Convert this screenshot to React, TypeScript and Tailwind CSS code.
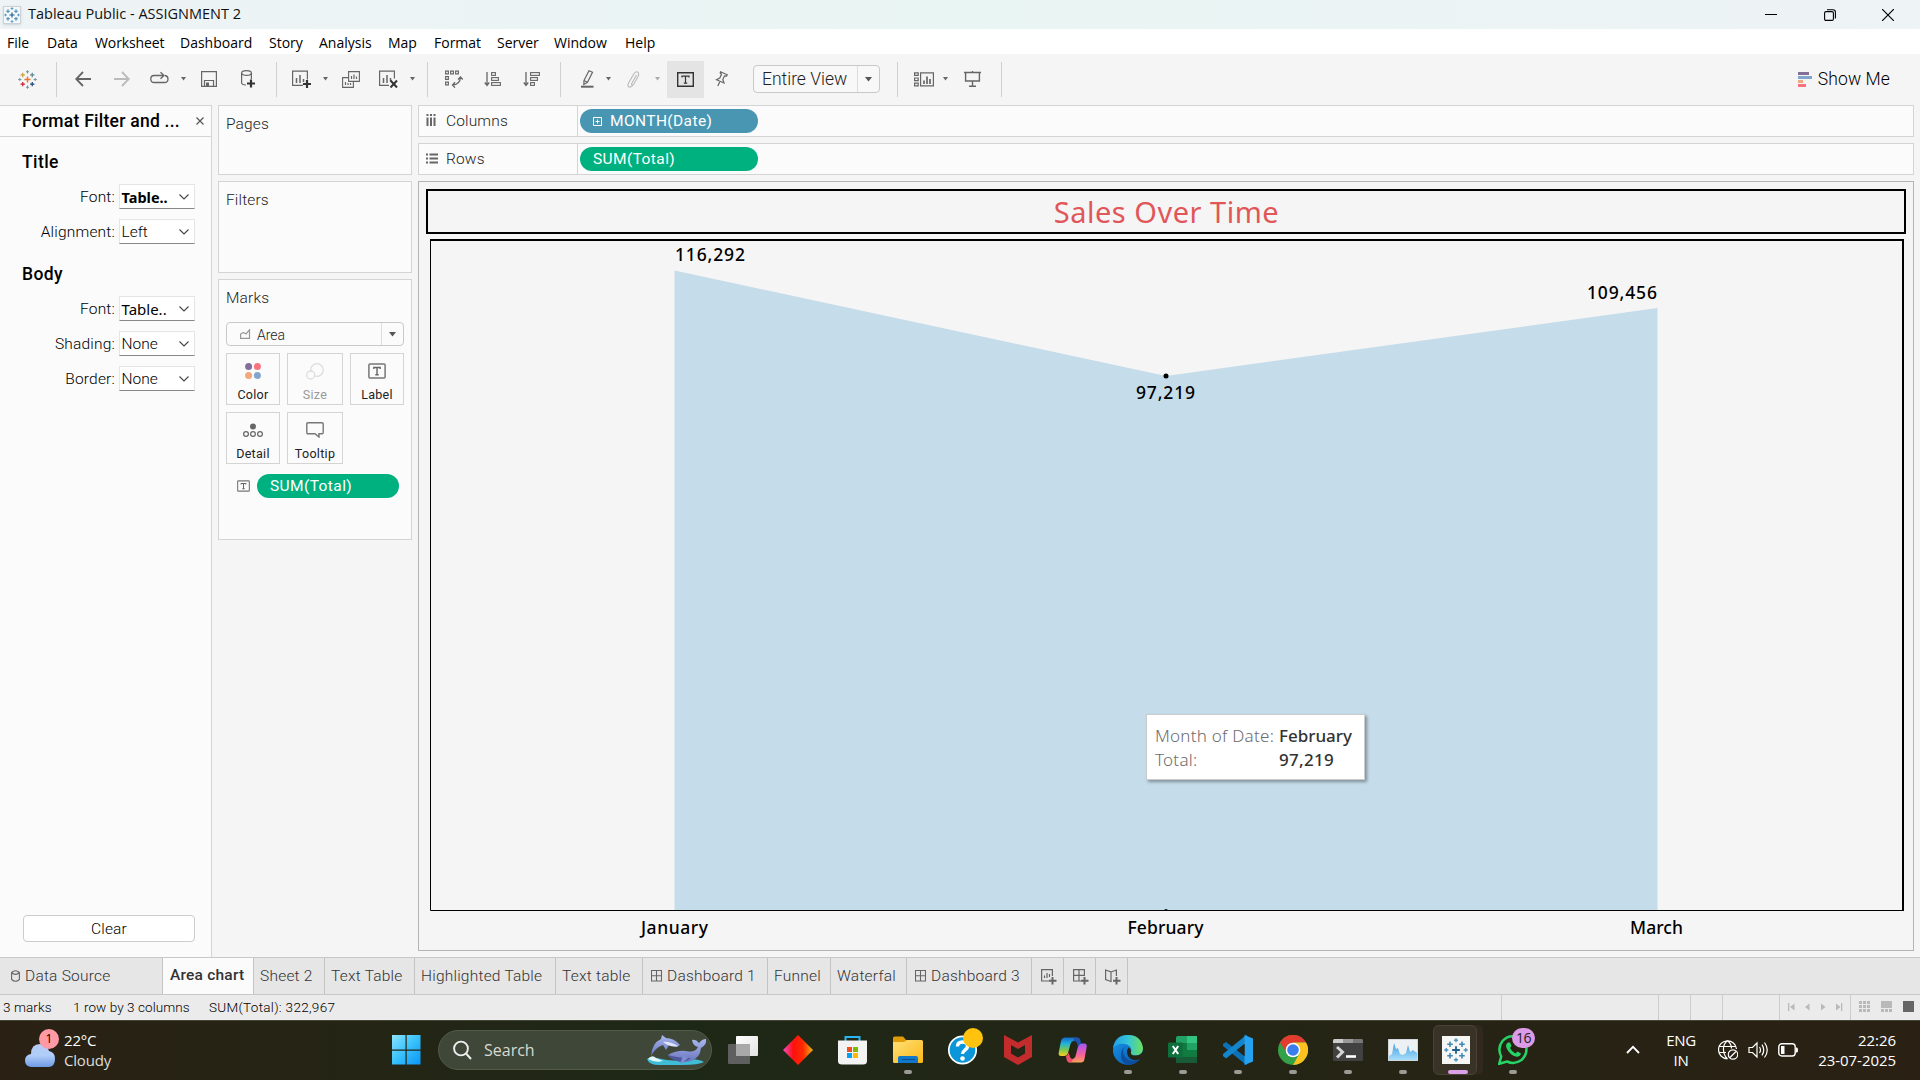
import React from "react";

const UI = "font-['Roboto','Liberation_Sans',sans-serif]";
const SEGOE = "font-['Open_Sans','Noto_Sans',sans-serif]";
const NOTO = "font-['Noto_Sans','Open_Sans',sans-serif]";

type P = { className?: string };

function Svg({ w, h, box, children, className = "" }: { w: number; h: number; box?: string; children: React.ReactNode; className?: string }) {
  return (
    <svg width={w} height={h} viewBox={box ?? `0 0 ${w} ${h}`} fill="none" className={`block shrink-0 ${className}`}>
      {children}
    </svg>
  );
}

const plus = (x: number, y: number, r: number) => `M${x - r} ${y}H${x + r}M${x} ${y - r}V${y + r}`;

function TableauMark({ size, colors }: { size: number; colors: string[] }) {
  const [c, a, b, d, e, f] = colors;
  return (
    <Svg w={size} h={size} box="0 0 20 20">
      <path d={plus(10, 10, 3.2)} stroke={c} strokeWidth="1.5" />
      <path d={plus(5, 5.2, 2.3)} stroke={a} strokeWidth="1.3" />
      <path d={plus(15, 5.2, 2.3)} stroke={b} strokeWidth="1.3" />
      <path d={plus(5, 14.8, 2.3)} stroke={d} strokeWidth="1.3" />
      <path d={plus(15, 14.8, 2.3)} stroke={e} strokeWidth="1.3" />
      <path d={plus(10, 1.9, 1.7) + plus(10, 18.1, 1.7) + plus(1.9, 10, 1.7) + plus(18.1, 10, 1.7)} stroke={f} strokeWidth="1.1" />
    </Svg>
  );
}

const BLUES = ["#1f5f8f", "#3f87b5", "#3f87b5", "#3f87b5", "#3f87b5", "#4d94bf"];

const Sep = () => <div className="h-[35px] w-px bg-[#cfcfcf]" />;

function Caret({ color = "#666" }: { color?: string }) {
  return (
    <Svg w={5} h={4}>
      <path d="M0 0H5L2.5 3.6Z" fill={color} />
    </Svg>
  );
}

function BigCaret() {
  return (
    <Svg w={7} h={5}>
      <path d="M0 0H7L3.5 4.5Z" fill="#555" />
    </Svg>
  );
}

const G = "#666";

function Toolbar() {
  return (
    <div className="flex h-[51px] items-center justify-between bg-[#f5f5f5] pb-px">
      <div className="grid grid-cols-[38px_19px_39px_36px_31px_20px_40px_35px_16px_31px_19px_37px_31px_17px_18px_39px_39px_37px_21px_25px_21px_28px_12px_48px_38px_144px_17px_29px_21px_37px_1px] items-center pl-[18px]">
        <TableauMark size={19} colors={["#e8762c", "#c9a03d", "#5b879b", "#c72037", "#1f457e", "#7099a5"]} />
        <Sep />
        <Svg w={16} h={16}><path d="M16 8H1.5M8 1L1.2 8L8 15" stroke={G} strokeWidth="1.8" /></Svg>
        <Svg w={16} h={16}><path d="M0 8H14.5M8 1L14.8 8L8 15" stroke="#bbb" strokeWidth="1.8" /></Svg>
        <Svg w={19} h={16}>
          <path d="M7 11.500H4Q.8 11.500 .8 8Q.8 4.500 4 4.500H13M10.500 1.200L14 4.500L10.500 7.800M15 4.500Q18 5 18 8Q18 11.500 14.500 11.500H7" stroke={G} strokeWidth="1.3" />
        </Svg>
        <Caret />
        <Svg w={16} h={16}><path d="M.6 .6H15.4V15.4H.6ZM3.500 15V9.500H12.500V15" stroke={G} strokeWidth="1.2" /><path d="M5 11.500H8V15H5Z" fill={G} /></Svg>
        <Svg w={15} h={18}>
          <ellipse cx="5.500" cy="3" rx="4.900" ry="2.400" stroke={G} strokeWidth="1.2" />
          <path d="M.6 3V13Q.8 14.800 5 15M10.400 3V9" stroke={G} strokeWidth="1.2" />
          <path d="M10 9.500V17.500M6 13.500H14" stroke="#333" strokeWidth="2.200" />
        </Svg>
        <Sep />
        <Svg w={19} h={18}>
          <path d="M11 15.400H.6V1.100H15.400V9.500" stroke={G} strokeWidth="1.200" />
          <path d="M4.500 8V13M8 5V13M11.500 9V12" stroke={G} strokeWidth="1.500" />
          <path d="M15 10V18M11 14H19" stroke="#333" strokeWidth="2.200" />
        </Svg>
        <Caret />
        <Svg w={18} h={17}>
          <path d="M6.600 .6H17.400V10.400H6.600ZM6 6.600H.6V16.400H11.400V11" stroke={G} strokeWidth="1.100" />
          <path d="M9.500 5V8M12 3.500V8M14.500 5.500V8M3.500 11V14M6 12V14M8.500 12V14" stroke={G} strokeWidth="1.200" />
        </Svg>
        <Svg w={19} h={18}>
          <path d="M10 15.400H.6V1.100H15.400V8.500" stroke={G} strokeWidth="1.200" />
          <path d="M4.500 8V13M8 5V13M11.500 8V11" stroke={G} strokeWidth="1.500" />
          <path d="M11.500 10.500L18 17.500M18 10.500L11.500 17.500" stroke="#333" strokeWidth="2" />
        </Svg>
        <Caret />
        <Sep />
        <Svg w={18} h={18}>
          <path d="M.6 1.100H3.400V3.900H.6ZM5.600 1.100H8.400V3.900H5.600ZM10.600 1.100H13.400V3.900H10.600ZM.6 6.600H3.400V9.400H.6ZM.6 12.100H3.400V14.900H.6Z" stroke={G} strokeWidth="1.100" />
          <path d="M15.500 7.500Q15 14 8 15M13 9.500L15.500 7L17.800 9.500M10 12.300L7.500 15L10 17.600" stroke={G} strokeWidth="1.300" />
        </Svg>
        <SortIcon rows={[5, 8, 10]} />
        <SortIcon rows={[10, 8, 5]} />
        <Sep />
        <Svg w={13} h={18}>
          <path d="M3 10.500L8 .8L11.500 2.300L6.500 12.300L2.800 14.500ZM3 10.500L6.500 12.300" stroke={G} strokeWidth="1.200" />
          <path d="M0 16.700H12.500" stroke={G} strokeWidth="2" />
        </Svg>
        <Caret />
        <Svg w={13} h={17}>
          <path d="M9.500 4L5 12Q4 13.600 5 14Q6 14.500 7 12.800L11 5.500Q12.600 2 10.500 1Q8.500 0 6.800 3L1.800 11.500Q0 15 2 16Q4.500 16.500 6 14" stroke="#b9b9b9" strokeWidth="1.100" />
        </Svg>
        <Caret color="#aaa" />
        <div className="flex h-[37px] w-[37px] items-center justify-center bg-[#e4e4e4]">
          <Svg w={17} h={15}><path d="M.7 .7H16.300V14.300H.7Z" stroke="#333" strokeWidth="1.400" /><path d="M5 5.500V4.200H12V5.500M8.500 4.200V11M6.800 11.200H10.200" stroke="#333" strokeWidth="1.200" /></Svg>
        </div>
        <Svg w={13} h={16}>
          <path d="M5.500 .8L12.300 3.800L11.500 5L9.500 4.800L7.800 8.500L9 12L1.500 8.700L4.800 7L6.500 3.300L5.200 2ZM5 10.300L2.800 15" stroke={G} strokeWidth="1.200" />
        </Svg>
        <div className="flex h-[28px] w-[127px] items-center rounded-sm border border-[#c9c9c9] bg-[#f8f8f8]">
          <span className={`${UI} w-[103px] pl-[8px] pt-px text-[17.500px] font-light leading-none text-[#222]`}>Entire View</span>
          <div className="flex h-full flex-1 items-center justify-center border-l border-[#ddd]"><BigCaret /></div>
        </div>
        <Sep />
        <Svg w={20} h={15}>
          <path d="M.6 .8H4.200V3.400H.6ZM.6 6H4.200V8.600H.6ZM.6 11.200H4.200V13.800H.6ZM6.600 .8H19.400V13.900H6.600Z" stroke={G} strokeWidth="1.200" />
          <path d="M10 8.500V12M13 4.500V12M16 7V12" stroke={G} strokeWidth="1.700" />
        </Svg>
        <Caret />
        <Svg w={17} h={16}><path d="M0 1.500H17M1.600 1.500V10H15.400V1.500M8.500 0V2M8.500 10V15M5 15.200H12" stroke={G} strokeWidth="1.400" /></Svg>
        <Sep />
      </div>
      <div className="flex items-center gap-[6px] pr-[30px]">
        <Svg w={14} h={15}>
          <path d="M0 0H11V3H0Z" fill="#82709a" /><path d="M0 4H14V7H0Z" fill="#82a5cb" /><path d="M0 8H5V11H0Z" fill="#f0a880" /><path d="M0 12H8V15H0Z" fill="#f8717f" />
        </Svg>
        <span className={`${UI} text-[17.500px] font-light tracking-[.1px] text-black`}>Show Me</span>
      </div>
    </div>
  );
}

function SortIcon({ rows }: { rows: number[] }) {
  return (
    <Svg w={18} h={16}>
      <path d="M3 1V14M.8 11.500L3 14.500L5.200 11.500" stroke={G} strokeWidth="1.300" />
      {rows.map((w, i) => (
        <rect key={i} x="7.600" y={1.6 + i * 5} width={w - 1.2} height="2.800" stroke={G} strokeWidth="1.100" />
      ))}
    </Svg>
  );
}

function MenuBar() {
  return (
    <div className={`${SEGOE} grid h-[25px] grid-cols-[40px_48px_85px_89px_50px_69px_46px_63px_57px_71px_60px] items-center bg-white pl-[7px] pt-[2px] text-[14px] leading-none text-black`}>
      <span>File</span>
      <span>Data</span>
      <span className="tracking-[-.1px]">Worksheet</span>
      <span>Dashboard</span>
      <span>Story</span>
      <span>Analysis</span>
      <span>Map</span>
      <span>Format</span>
      <span>Server</span>
      <span>Window</span>
      <span>Help</span>
    </div>
  );
}

function TitleBar() {
  return (
    <div className="flex h-[29px] items-center justify-between bg-gradient-to-r from-[#eef3f5] via-[#e9f5f3] to-[#eef3f5] pl-[3px] pr-[26px]">
      <div className="flex items-center gap-[7px]">
        <div className="flex h-[18px] w-[18px] items-center justify-center border border-[#ccd2d6] bg-[#f4f7f9] shadow-sm">
          <TableauMark size={16} colors={BLUES} />
        </div>
        <span className={`${SEGOE} text-[14.500px] leading-none text-[#111]`}>Tableau Public - ASSIGNMENT 2</span>
      </div>
      <div className="flex items-center gap-[46.500px]">
        <Svg w={12} h={12}><path d="M0 5.500H12" stroke="#000" /></Svg>
        <Svg w={12} h={12}><path d="M.6 4Q.6 2.600 2 2.600H8Q9.400 2.600 9.400 4V10Q9.400 11.400 8 11.400H2Q.6 11.400 .6 10ZM3 .7H9Q11.400 .7 11.400 3V9.500" stroke="#000" strokeWidth="1.100" /></Svg>
        <Svg w={12} h={12}><path d="M0 0L12 12M12 0L0 12" stroke="#000" strokeWidth="1.200" /></Svg>
      </div>
    </div>
  );
}

function FormatRow({ label, value, bold = false, noto = false, className = "" }: { label: string; value: string; bold?: boolean; noto?: boolean; className?: string }) {
  return (
    <div className={`flex h-[25px] items-center ${className}`}>
      <span className={`${UI} w-[115px] pt-[2px] text-right text-[15.500px] font-light leading-none tracking-[.2px] text-black`}>{label}</span>
      <div className="ml-[4px] flex h-[25px] w-[76px] items-center justify-between border border-b-[#888] border-l-[#e5e5e5] border-r-[#e5e5e5] border-t-[#e5e5e5] bg-white pl-[1.500px] pr-[5px]">
        <span className={`${noto ? NOTO : UI} ${bold ? "font-bold text-[14.500px]" : noto ? "text-[15px]" : "text-[15.500px] font-light"} pt-[2px] leading-none text-black`}>{value}</span>
        <Svg w={10} h={6}><path d="M.5 .5L5 5L9.500 .5" stroke="#444" strokeWidth="1.100" /></Svg>
      </div>
    </div>
  );
}

function FormatPanel() {
  return (
    <div className="flex w-[212px] flex-col border-r border-t border-[#d4d4d4] bg-[#fbfbfb]">
      <div className="flex h-[31px] items-center justify-between border-b border-[#d4d4d4] pl-[22px] pr-[7px]">
        <span className={`${UI} pt-[2px] text-[17.500px] font-medium leading-none tracking-[.25px] text-black`}>Format Filter and ...</span>
        <Svg w={8} h={8}><path d="M.5 .5L7.500 7.500M7.500 .5L.5 7.500" stroke="#555" strokeWidth="1.200" /></Svg>
      </div>
      <div className={`${UI} mt-[15px] pl-[22px] text-[17.500px] font-medium leading-[20px] tracking-[.4px] text-black`}>Title</div>
      <FormatRow className="mt-[12px]" label="Font:" value="Table.." bold noto />
      <FormatRow className="mt-[10px]" label="Alignment:" value="Left" />
      <div className={`${UI} mt-[20px] pl-[22px] text-[17.500px] font-medium leading-[20px] tracking-[.4px] text-black`}>Body</div>
      <FormatRow className="mt-[12px]" label="Font:" value="Table.." noto />
      <FormatRow className="mt-[10px]" label="Shading:" value="None" />
      <FormatRow className="mt-[10px]" label="Border:" value="None" />
      <div className="flex-1" />
      <button className={`${UI} mb-[15px] ml-[23px] h-[27px] w-[172px] rounded border border-[#ccc] bg-white pt-[2px] text-[15.500px] font-light leading-none tracking-[.2px] text-black`}>Clear</button>
    </div>
  );
}

function CardTitle({ children }: { children: React.ReactNode }) {
  return <div className={`${UI} pl-[7px] text-[15.500px] font-light leading-[20px] tracking-[.15px] text-[#222]`}>{children}</div>;
}

function MarkButton({ label, muted = false, className = "", children }: P & { label: string; muted?: boolean; children: React.ReactNode }) {
  return (
    <div className={`flex h-[52px] flex-col items-center border border-[#d4d4d4] bg-[#fbfbfb] pt-[8px] ${className}`}>
      <div className="flex h-[18px] items-center">{children}</div>
      <span className={`${UI} mt-[9px] text-[12.500px] leading-none tracking-[.3px] ${muted ? "text-[#999]" : "text-[#222]"}`}>{label}</span>
    </div>
  );
}

function LabelGlyph({ w, h }: { w: number; h: number }) {
  return (
    <Svg w={w} h={h} box="0 0 18 16">
      <rect x=".9" y=".9" width="16.200" height="14.200" rx="1" stroke="#777" strokeWidth="1.500" />
      <path d="M5.800 6V4.500H12.200V6M9 4.500V11.500M7.300 11.700H10.700" stroke="#666" strokeWidth="1.400" />
    </Svg>
  );
}

function Cards() {
  return (
    <div className="ml-[6px] flex w-[194px] flex-col gap-[6px]">
      <div className="h-[70px] border border-[#d4d4d4] bg-[#fbfbfb] pt-[8px]"><CardTitle>Pages</CardTitle></div>
      <div className="h-[92px] border border-[#d4d4d4] bg-[#fbfbfb] pt-[8px]"><CardTitle>Filters</CardTitle></div>
      <div className="h-[261px] border border-[#d4d4d4] bg-[#fbfbfb] pt-[8px]">
        <CardTitle>Marks</CardTitle>
        <div className="ml-[7px] mt-[14px] flex h-[24px] w-[178px] items-center rounded-sm border border-[#c9c9c9]">
          <Svg w={12} h={10} className="ml-[13px]"><path d="M.6 9.400V5L3.500 3.500L6 5L9.500 .8V9.400Z" stroke="#999" strokeWidth="1.200" /></Svg>
          <span className={`${UI} ml-[5px] flex-1 pt-[2px] text-[14px] leading-none font-light text-[#222]`}>Area</span>
          <div className="flex h-full w-[22px] items-center justify-center border-l border-[#ddd]"><BigCaret /></div>
        </div>
        <div className="ml-[7px] mt-[7px] grid grid-cols-[54px_56px_54px] gap-[7px]">
          <MarkButton label="Color">
            <Svg w={16} h={16}><circle cx="3.600" cy="3.600" r="3.500" fill="#82709a" /><circle cx="12.400" cy="3.600" r="3.500" fill="#f8717f" /><circle cx="3.600" cy="12.400" r="3.500" fill="#f4a77c" /><circle cx="12.400" cy="12.400" r="3.500" fill="#82a5cb" /></Svg>
          </MarkButton>
          <MarkButton label="Size" muted>
            <Svg w={18} h={17}><circle cx="11" cy="7" r="6.300" stroke="#ddd" strokeWidth="1.300" /><circle cx="4.700" cy="12" r="4" fill="#fbfbfb" stroke="#ddd" strokeWidth="1.300" /></Svg>
          </MarkButton>
          <MarkButton label="Label"><LabelGlyph w={18} h={16} /></MarkButton>
          <MarkButton label="Detail">
            <Svg w={20} h={15}><circle cx="10" cy="3.500" r="3" fill={G} /><circle cx="3" cy="11" r="2.400" stroke={G} strokeWidth="1.200" /><circle cx="10" cy="11" r="2.400" stroke={G} strokeWidth="1.200" /><circle cx="17" cy="11" r="2.400" stroke={G} strokeWidth="1.200" /></Svg>
          </MarkButton>
          <MarkButton label="Tooltip">
            <Svg w={18} h={16}><path d="M2 .8H16Q17.200 .8 17.200 2V10.500Q17.200 11.700 16 11.700H13V15L9 11.700H2Q.8 11.700 .8 10.500V2Q.8 .8 2 .8Z" stroke="#777" strokeWidth="1.400" /></Svg>
          </MarkButton>
        </div>
        <div className="ml-[18px] mt-[10px] flex items-center">
          <LabelGlyph w={13} h={12} />
          <div className={`${UI} ml-[7px] flex h-[24px] w-[142px] items-center rounded-full bg-[#00b180] pl-[13px] pt-[2px] text-[15.500px] leading-none tracking-[.4px] text-white`}>SUM(Total)</div>
        </div>
      </div>
    </div>
  );
}

function Shelf({ icon, label, children }: { icon: React.ReactNode; label: string; children: React.ReactNode }) {
  return (
    <div className="flex h-[32px] items-center border border-[#d4d4d4] bg-[#fbfbfb]">
      <div className="flex h-full w-[159px] items-center border-r border-[#d4d4d4] pl-[7px]">
        <div className="w-[20px] pb-[2px]">{icon}</div>
        <span className={`${UI} pt-[2px] text-[15.500px] font-light leading-none tracking-[.15px] text-[#222]`}>{label}</span>
      </div>
      {children}
    </div>
  );
}

function Chart() {
  return (
    <svg width={1480} height={709} viewBox="426 239 1480 709" fill="none" className="mt-[5px] block">
      <path d="M674.500 270.500L1166 376L1657.500 308V910H674.500Z" fill="#c5dcea" />
      <path d="M430 240H1904" stroke="#000" strokeWidth="2" />
      <path d="M1903 239V911" stroke="#000" strokeWidth="2" />
      <path d="M430.500 239V910.500H1903" stroke="#000" strokeWidth="1" />
      <circle cx="1166" cy="376" r="2.500" fill="#000" />
      <path d="M1163.500 911Q1166 907 1168.500 911Z" fill="#000" />
      <g className={`${NOTO} font-medium`} fontSize="17.500" fill="#000">
        <text x="675" y="261" textLength="70">116,292</text>
        <text x="1136" y="399" textLength="59">97,219</text>
        <text x="1587" y="299" textLength="70">109,456</text>
        <text x="641" y="934" textLength="67">January</text>
        <text x="1127.500" y="934" textLength="76">February</text>
        <text x="1630" y="934" textLength="53">March</text>
      </g>
    </svg>
  );
}

function View() {
  return (
    <div className="relative mt-[6px] h-[770px] border border-[#b4b4b4] bg-[#f5f5f5] pl-[7px] pt-[7px]">
      <div className={`${NOTO} flex h-[45px] w-[1480px] items-center justify-center border-2 border-black pl-[1px] text-[29px] leading-none tracking-[.5px] text-[#e15759]`}>Sales Over Time</div>
      <Chart />
      <div className={`${NOTO} absolute left-[727px] top-[532px] grid h-[66px] w-[219px] grid-cols-[124px_1fr] content-center whitespace-nowrap border border-[#ccc] bg-white pl-[8px] pt-[2px] text-[17px] leading-[24px] text-[#333] shadow-[2px_2px_3px_rgba(0,0,0,.35)]`}>
        <span className="font-light tracking-[.25px] text-[#6c6c6c]">Month of Date:</span>
        <span className="font-medium">February</span>
        <span className="font-light tracking-[.25px] text-[#6c6c6c]">Total:</span>
        <span className="font-medium tracking-[.3px]">97,219</span>
      </div>
    </div>
  );
}

function GridGlyph() {
  return <Svg w={11} h={12} className="mb-[2px] mr-[5px]"><path d="M.5 .5H10.500V11H.5ZM5.500 .5V11M.5 5.700H10.500" stroke="#666" strokeWidth="1.100" /></Svg>;
}

function Tabs() {
  const tab = "flex items-center border-r border-[#c4c4c4] pl-[6px] pt-[2px] whitespace-nowrap";
  return (
    <div className={`${UI} grid h-[38px] grid-cols-[163px_91px_71px_90px_141px_87px_125px_63px_76px_125px_32px_32px_32px] border-y border-[#c8c8c8] bg-[#e6e6e6] text-[15.500px] font-light leading-none tracking-[.22px] text-[#333]`}>
      <div className={`${tab} pl-[11px]`}>
        <Svg w={9} h={12} className="mb-[3px] mr-[5px]"><path d="M.6 2.500Q4.500 -1 8.400 2.500V9.500Q4.500 13 .6 9.500ZM.6 2.800Q4.500 6 8.400 2.800" stroke="#666" strokeWidth="1.100" /></Svg>
        Data Source
      </div>
      <div className="flex items-center whitespace-nowrap border-r border-[#c4c4c4] bg-[#fbfbfb] pb-[1px] pl-[7px] font-medium">Area chart</div>
      <div className={tab}>Sheet 2</div>
      <div className={tab}>Text Table</div>
      <div className={tab}>Highlighted Table</div>
      <div className={tab}>Text table</div>
      <div className={`${tab} pl-[8px]`}><GridGlyph />Dashboard 1</div>
      <div className={tab}>Funnel</div>
      <div className={tab}>Waterfal</div>
      <div className={`${tab} pl-[8px]`}><GridGlyph />Dashboard 3</div>
      <div className={`${tab} pl-[9px]`}>
        <Svg w={16} h={16}><path d="M8 12H.6V.6H11.400V7M3.500 6.500V9M6 4V9M8.500 5V8" stroke={G} strokeWidth="1.200" /><path d="M11.500 8V15.500M8 11.800H15.500" stroke={G} strokeWidth="2" /></Svg>
      </div>
      <div className={`${tab} pl-[9px]`}>
        <Svg w={16} h={16}><path d="M8 12H.6V.6H11.400V7M6 .6V12M.6 6.300H11.400" stroke={G} strokeWidth="1.200" /><path d="M11.500 8V15.500M8 11.800H15.500" stroke={G} strokeWidth="2" /></Svg>
      </div>
      <div className={`${tab} pl-[9px]`}>
        <Svg w={16} h={16}><path d="M6 12.500L.6 10.500V1L6 3ZM6 3L11.400 1V7" stroke={G} strokeWidth="1.200" /><path d="M11.500 8V15.500M8 11.800H15.500" stroke={G} strokeWidth="2" /></Svg>
      </div>
    </div>
  );
}

function StatusBar() {
  const B = "#b9b9b9";
  return (
    <div className={`${UI} flex h-[25px] items-center bg-[#ebebeb] text-[13.500px] font-light leading-none tracking-[.08px] text-black`}>
      <div className="grid flex-1 grid-cols-[70px_136px_200px] pl-[3px]">
        <span>3 marks</span>
        <span>1 row by 3 columns</span>
        <span className="tracking-[.3px]">SUM(Total): 322,967</span>
      </div>
      <div className="grid h-full grid-cols-[157px_32px_32px_57px_71px_70px]">
        <div className="border-l border-[#ccc]" />
        <div className="border-l border-[#ccc]" />
        <div className="border-l border-[#ccc]" />
        <div className="border-l border-[#ccc]" />
        <div className="flex items-center border-l border-[#ccc] pb-[2px] pl-[8px]">
          <Svg w={55} h={8}>
            <path d="M0 0H1.300V8H0ZM6.500 .5V7.500L2 4ZM21.500 .5V7.500L17 4ZM33 .5V7.500L37.500 4ZM48 .5V7.500L52.500 4ZM53 0H54.300V8H53Z" fill={B} />
          </Svg>
        </div>
        <div className="flex items-center gap-[11px] border-l border-[#ccc] pb-[2px] pl-[8px]">
          <Svg w={11} h={11}><path d="M1.500 0V11M5.500 0V11M9.500 0V11" stroke={B} strokeWidth="3" strokeDasharray="3 1" /></Svg>
          <Svg w={11} h={11}><path d="M0 0H11V7H0ZM0 8H3V11H0ZM4 8H7V11H4ZM8 8H11V11H8Z" fill={B} /></Svg>
          <Svg w={11} h={11}><path d="M0 0H11V11H0Z" fill={G} /></Svg>
        </div>
      </div>
    </div>
  );
}

function Gradients() {
  const stops = (cs: string[]) => cs.map((c, i) => <stop key={i} offset={i / (cs.length - 1)} stopColor={c} />);
  return (
    <svg width="0" height="0" className="absolute">
      <defs>
        <linearGradient id="win" x1="0" y1="0" x2="1" y2="1">{stops(["#8ce5ff", "#38c1fb", "#0a95f5"])}</linearGradient>
        <linearGradient id="dia">{stops(["#f04fc8", "#ff1010", "#ff2a00", "#f0b414"])}</linearGradient>
        <linearGradient id="fold" x1="0" y1="0" x2="1" y2="1">{stops(["#ffe07a", "#fbb816"])}</linearGradient>
        <linearGradient id="edgeTop">{stops(["#1f9fe6", "#35c5d8", "#6fe05a"])}</linearGradient>
        <linearGradient id="edgeBody" x1="0" y1="0" x2="1" y2="1">{stops(["#1a9be6", "#0f74cc", "#0c4f9c"])}</linearGradient>
        <linearGradient id="copA" x1="0" y1="0" x2="0" y2="1">{stops(["#1468c8", "#20b4dc", "#7ac850", "#f5d020"])}</linearGradient>
        <linearGradient id="copB" x1="0" y1="0" x2="0" y2="1">{stops(["#9a5cf0", "#d858c8", "#fa6a8c", "#fca25a"])}</linearGradient>
        <linearGradient id="mon" x1="0" y1="0" x2="0" y2="1">{stops(["#3f9fe0", "#a8ddfb"])}</linearGradient>
        <linearGradient id="cloud" x1="0" y1="0" x2="0" y2="1">{stops(["#b6ccf7", "#b0cdf8", "#6f9ae6"])}</linearGradient>
        <linearGradient id="whale" x1="0" y1="0" x2="0" y2="1">{stops(["#a9b8ee", "#6a74bd"])}</linearGradient>
        <linearGradient id="tv" x1="0" y1="0" x2="1" y2="1">{stops(["#ffffff", "#e2e2e2"])}</linearGradient>
      </defs>
    </svg>
  );
}

function Dolphins() {
  return (
    <Svg w={60} h={32}>
      <path d="M0 25Q3 22 10 24Q25 28 38 26Q50 24 57 28Q52 31 35 31H12Q2 31 0 25Z" fill="#3fbcd6" />
      <path d="M1 25Q5 20 9 24L16 27Q8 29 1 25Z" fill="#e3f7fb" />
      <path d="M4 22Q5 9 14 5L15 1L19 4Q27 4 33 11L30 13Q25 12 22 11L19 16L16 11Q9 13 4 22Z" fill="url(#whale)" />
      <path d="M16 8Q22 7 31 12Q24 14 16 8Z" fill="#dfe6fb" />
      <path d="M21 21Q30 16 39 17Q48 19 51 13Q46 12 45 6Q49 5 52 9Q55 5 59 5Q60 11 54 14Q53 24 44 27Q30 31 21 21Z" fill="url(#whale)" />
      <path d="M21 21Q30 24 44 24Q38 29 30 27Q24 25 21 21Z" fill="#4e589f" />
      <path d="M36 21L33 31L41 24Z" fill="#7f8cd0" />
    </Svg>
  );
}

function AppCell({ dot, children, extra }: { dot?: boolean; children: React.ReactNode; extra?: React.ReactNode }) {
  return (
    <div className="relative flex h-[60px] w-[55px] items-center justify-center">
      {children}
      {dot && <div className="absolute bottom-[6px] left-[24px] h-[4px] w-[8px] rounded-full bg-[#9c9a94]" />}
      {extra}
    </div>
  );
}

function Taskbar() {
  return (
    <div className={`${SEGOE} flex h-[60px] items-center border-t border-[#45453a] bg-gradient-to-r from-[#2a2114] via-[#1e2816] via-[35%] to-[#2a2114] pb-[2px] text-white`}>
      <Gradients />
      <div className="flex w-[389px] items-center pl-[25px]">
        <div className="relative h-[42px] w-[39px]">
          <Svg w={31} h={24} className="mt-[14px]"><path d="M6 24Q0 23 0 17.500Q0 12 6 11Q6 1 15 1Q22 1 24 8Q30 9 30 16Q30 23 24 24Z" fill="url(#cloud)" /></Svg>
          <div className="absolute left-[14px] top-0 flex h-[20px] w-[20px] items-center justify-center rounded-full bg-[#ff99a4] text-[12px] leading-none text-black">1</div>
        </div>
        <div className="text-[15px] leading-[20px] tracking-[-.2px]">
          <div>22°C</div>
          <div className="text-[#ddd]">Cloudy</div>
        </div>
      </div>
      <Svg w={34} h={30} box="-2 0 34 30"><path d="M1 0H14.500V14.500H1V1ZM15.700 0H29.500V14.500H15.700ZM1 15.700H14.500V29.500H1ZM15.700 15.700H29.500V29.500H15.700Z" fill="url(#win)" /></Svg>
      <div className="ml-[15px] mt-px flex h-[40px] w-[274px] items-center rounded-full border border-[#525a47] bg-[#3f4738] pl-[14px]">
        <Svg w={19} h={20}><circle cx="8" cy="8.500" r="6.900" stroke="#eee" strokeWidth="1.900" /><path d="M13 13.500L18 19" stroke="#eee" strokeWidth="2" /></Svg>
        <span className="ml-[12px] w-[163px] text-[16px] leading-none text-[#d8dad4]">Search</span>
        <Dolphins />
      </div>
      <div className="ml-[3px] flex">
        <AppCell><Svg w={30} h={28}><rect x="0" y="8" width="22" height="20" rx="1" fill="#5f5f5f" /><rect x="8" y="0" width="22" height="20" rx="1" fill="url(#tv)" /><path d="M8 8H22V20H8Z" fill="#a9a9a9" /></Svg></AppCell>
        <AppCell><Svg w={30} h={30}><path d="M15 0L30 15L15 30L0 15Z" fill="url(#dia)" /></Svg></AppCell>
        <AppCell>
          <Svg w={29} h={30}>
            <path d="M7.500 6V2H21.500V6" stroke="#29b6f2" strokeWidth="2" />
            <path d="M0 5.500H29V26Q29 29.500 25 29.500H4Q0 29.500 0 26Z" fill="#f3f3f3" />
            <path d="M9 12H14V17H9Z" fill="#f04e23" /><path d="M15 12H20V17H15Z" fill="#7fba00" /><path d="M9 18H14V23H9Z" fill="#00a4ef" /><path d="M15 18H20V23H15Z" fill="#ffb900" />
          </Svg>
        </AppCell>
        <AppCell dot>
          <Svg w={30} h={28}>
            <path d="M0 2Q0 .5 1.500 .5H10L13 4H28V12H0Z" fill="#e09b08" />
            <path d="M0 6H11L14 4H28.500Q30 4 30 5.500V25.500Q30 27 28.500 27H1.500Q0 27 0 25.500Z" fill="url(#fold)" />
            <path d="M5 27V22Q5 20 7 20H23Q25 20 25 22V27Z" fill="#1177c8" /><path d="M9 23.500H22" stroke="#0a4e91" />
          </Svg>
        </AppCell>
        <AppCell extra={<div className="absolute left-[28px] top-[8px] h-[20px] w-[20px] rounded-full bg-[#ffc20e]" />}>
          <Svg w={30} h={30}><circle cx="14.500" cy="15" r="13.700" fill="#0a96d8" stroke="#fff" strokeWidth="1.700" /><path d="M9.500 11.500Q9.500 7 14.500 7Q19.500 7 19.500 11Q19.500 13.500 16.500 15.500Q14.500 17 14.500 19" stroke="#fff" strokeWidth="3.400" /><circle cx="14.500" cy="23.500" r="2.300" fill="#fff" /></Svg>
        </AppCell>
        <AppCell><Svg w={28} h={30}><path d="M0 0L14 7.500L28 0V22L14 30L0 22ZM7 10V18.500L14 22.500L21 18.500V10L14 14Z" fill="#c22c2c" fillRule="evenodd" /></Svg></AppCell>
        <AppCell>
          <Svg w={30} h={26}>
            <path d="M7 .5H18Q21 .5 20 4H16Q13 4 12.200 8L10 16Q9 19 6 19H3Q0 19 .8 15L3 4Q4 .5 7 .5Z" fill="url(#copA)" />
            <path d="M23 25.500H12Q9 25.500 10 22H14Q17 22 17.800 18L20 9.500Q21 6.500 24 6.500H26.500Q29.500 6.500 28.500 11L26.500 22Q26 25.500 23 25.500Z" fill="url(#copB)" />
            <path d="M17 .5H19Q22 .5 22.500 3.500L23 6.500Q20.500 7 20 10L19 6Q18.500 4 15.500 4Q16 .5 17 .5Z" fill="#1d52b0" />
            <path d="M12 25.500Q9 25.500 8.500 22L8 19Q10 18.500 10.500 15.500L12 20Q12.500 22 15 22Q14.500 25.500 12 25.500Z" fill="#f04f6c" />
          </Svg>
        </AppCell>
        <AppCell dot>
          <Svg w={30} h={30}>
            <circle cx="15" cy="15" r="15" fill="url(#edgeBody)" />
            <path d="M0 13Q2 0 15 0Q28 0 30 13Q30 20 23 20.500Q17 20.500 18 17Q19.500 12 14 9.500Q6 7 0 13Z" fill="url(#edgeTop)" />
            <path d="M12 11.500Q8 16 12 22Q18 29 27 23.500Q23 30 15 30Q8 28 8 20Q8 14 12 11.500Z" fill="#0d4f9e" />
            <path d="M18 17Q17 20.500 23 20.500Q28 20.500 30 16L31 22L27 24Q19 27 15 21Q13 16 15.500 12.500Q18.500 14 18 17Z" fill="#262515" />
          </Svg>
        </AppCell>
        <AppCell dot>
          <Svg w={30} h={28}>
            <path d="M8 2Q8 0 10 0H19V7H8Z" fill="#21a366" /><path d="M19 0H29V7H19Z" fill="#33c481" /><path d="M8 7H19V21H8Z" fill="#107c41" /><path d="M19 7H29V14H19Z" fill="#21a366" /><path d="M19 14H29V21H19Z" fill="#107c41" /><path d="M8 21H29V27H8Z" fill="#185c37" />
            <rect x="0" y="6.500" width="15" height="15" rx="1" fill="#0f6f3c" /><path d="M4.800 10L10.200 18M10.200 10L4.800 18" stroke="#fff" strokeWidth="2" />
          </Svg>
        </AppCell>
        <AppCell dot>
          <Svg w={30} h={30}>
            <path d="M0 9L3 7L24 23V30L22 29L0 11Z" fill="#0b72b8" /><path d="M0 21L3 23.500L24 7V0L22 1L0 19Z" fill="#1285cc" />
            <path d="M21.500 0L30 3.500V26.500L21.500 30Z" fill="#26a3f0" /><path d="M21.500 9V21L14 15Z" fill="#26251a" />
          </Svg>
        </AppCell>
        <AppCell dot>
          <Svg w={30} h={30}>
            <circle cx="15" cy="15" r="15" fill="#34a048" />
            <path d="M2 7.500A15 15 0 0 1 28 7.500H15L9 18Z" fill="#e33b2e" />
            <path d="M28 7.500A15 15 0 0 1 15 30L21.500 18.500L15 7.500Z" fill="#fcc31e" />
            <circle cx="15" cy="15" r="7.300" fill="#fff" /><circle cx="15" cy="15" r="5.800" fill="#3b7ded" />
          </Svg>
        </AppCell>
        <AppCell dot>
          <Svg w={30} h={22}><rect width="30" height="22" rx="1.500" fill="#414141" /><path d="M0 1.500Q0 0 1.500 0H10V4H0Z" fill="#ccc" /><path d="M10 0H20V4H10Z" fill="#999" /><path d="M20 0H28.500Q30 0 30 1.500V4H20Z" fill="#777" /><path d="M4 8L9.500 13L4 18.500" stroke="#d5d5d5" strokeWidth="3" /><path d="M13 17.500H23" stroke="#fff" strokeWidth="2.600" /></Svg>
        </AppCell>
        <AppCell dot>
          <Svg w={30} h={22}><path d="M0 0H30V22H0Z" fill="#eef1f4" stroke="#b5bcc2" /><path d="M1 21V17L4 15L6 4L8 10L10 9L12 15L15 16L18 14L20 6L22 13L25 11L29 14V21Z" fill="url(#mon)" /></Svg>
        </AppCell>
        <AppCell extra={<div className="absolute bottom-[6px] left-[18px] h-[4px] w-[20px] rounded-full bg-[#dca0e6]" />}>
          <div className="flex h-[50px] w-[50px] rounded-md bg-[#312a1c] pr-[6px]">
            <div className="flex h-[50px] w-[44px] items-center justify-center rounded-md border border-[#4a4335] bg-[#393226] pl-[3px]">
              <div className="flex h-[28px] w-[28px] items-center justify-center bg-[#f6f6f4]"><TableauMark size={24} colors={BLUES} /></div>
            </div>
          </div>
        </AppCell>
        <AppCell dot extra={<div className="absolute left-[27px] top-[8px] flex h-[20px] w-[23px] items-center justify-center rounded-full bg-[#dc9be6] text-[14px] leading-none tracking-[-.5px] text-[#222]">16</div>}>
          <Svg w={30} h={30}><path d="M1.200 28.800L3.200 21.500Q-1 13 4.500 6Q9 1 15.500 1.300Q25 2 28 10.500Q30 19 23.500 25Q16.500 30 9 26.500Z" stroke="#25d366" strokeWidth="2.500" /><path d="M10 7.500Q7 9.500 8.500 13Q12 20.500 18.500 21.800Q22 22 23 18.500L19.500 16.500L17.500 18.500Q13.500 16.500 12 13L13.500 11L12 7.500Z" fill="#25d366" /></Svg>
        </AppCell>
      </div>
      <div className="ml-[86px] flex items-center">
        <Svg w={14} h={9} className="mt-[-1px]"><path d="M1 8L7 1.800L13 8" stroke="#fff" strokeWidth="1.800" /></Svg>
        <div className="ml-[22px] w-[38px] text-center text-[15px] leading-[20px] tracking-[-.3px]"><div>ENG</div><div>IN</div></div>
        <Svg w={20} h={20} className="ml-[18px]">
          <path d="M18.500 9A9 9 0 1 0 9.500 18.800M9.500 .8Q5 4 5.500 10Q6 16 9.500 18.800M9.500 .8Q13.500 4 13.500 8.500M1.500 6.500H17.500M1.500 12.500H8" stroke="#fff" strokeWidth="1.200" /><circle cx="15" cy="14.500" r="4.700" stroke="#fff" strokeWidth="1.200" /><path d="M12 17.500L18 11.500" stroke="#fff" strokeWidth="1.200" />
        </Svg>
        <Svg w={20} h={18} className="ml-[10px]"><path d="M1 6.500H4.500L9 2V16L4.500 11.500H1ZM11.500 6Q13.500 9 11.500 12M14 3.700Q17.500 9 14 14.300M16.500 1.500Q22 9 16.500 16.500" stroke="#fff" strokeWidth="1.200" /></Svg>
        <Svg w={20} h={14} className="ml-[10px]"><rect x=".8" y=".8" width="16.400" height="12.200" rx="3" stroke="#fff" strokeWidth="1.400" /><path d="M3 3H6.500V11H3Z" fill="#fff" /><path d="M18 4.500H19Q20 4.500 20 7Q20 9.500 19 9.500H18Z" fill="#fff" /></Svg>
        <div className="ml-[18px] w-[80px] text-right text-[15px] leading-[20px] tracking-[-.05px]"><div>22:26</div><div>23-07-2025</div></div>
      </div>
    </div>
  );
}

export default function App() {
  return (
    <div className="flex h-[1080px] w-[1920px] flex-col overflow-hidden bg-[#f5f5f5]">
      <TitleBar />
      <MenuBar />
      <Toolbar />
      <div className="flex h-[852px]">
        <FormatPanel />
        <Cards />
        <div className="ml-[5px] flex w-[1497px] flex-col pl-[1px]">
          <Shelf label="Columns" icon={<Svg w={10} h={12}><path d="M1.500 0V12M5 0V12M8.500 0V12" stroke={G} strokeWidth="2" strokeDasharray="2 1.500 12" /></Svg>}>
            <div className={`${UI} ml-[2px] flex h-[24px] w-[178px] items-center rounded-full bg-[#4996b2] pl-[13px] pt-[2px] text-[15.500px] leading-none tracking-[.4px] text-white`}>
              <Svg w={9} h={9} className="mb-[2px] mr-[8px]"><path d="M.5 .5H8.500V8.500H.5ZM4.500 2.500V6.500M2.500 4.500H6.500" stroke="#fff" /></Svg>
              MONTH(Date)
            </div>
          </Shelf>
          <div className="h-[6px]" />
          <Shelf label="Rows" icon={<Svg w={12} h={11}><path d="M0 1.500H12M0 5.500H12M0 9.500H12" stroke={G} strokeWidth="2" strokeDasharray="2 1.500 12" /></Svg>}>
            <div className={`${UI} ml-[2px] flex h-[24px] w-[178px] items-center rounded-full bg-[#00b180] pl-[13px] pt-[2px] text-[15.500px] leading-none tracking-[.4px] text-white`}>SUM(Total)</div>
          </Shelf>
          <View />
        </div>
      </div>
      <Tabs />
      <StatusBar />
      <Taskbar />
    </div>
  );
}
